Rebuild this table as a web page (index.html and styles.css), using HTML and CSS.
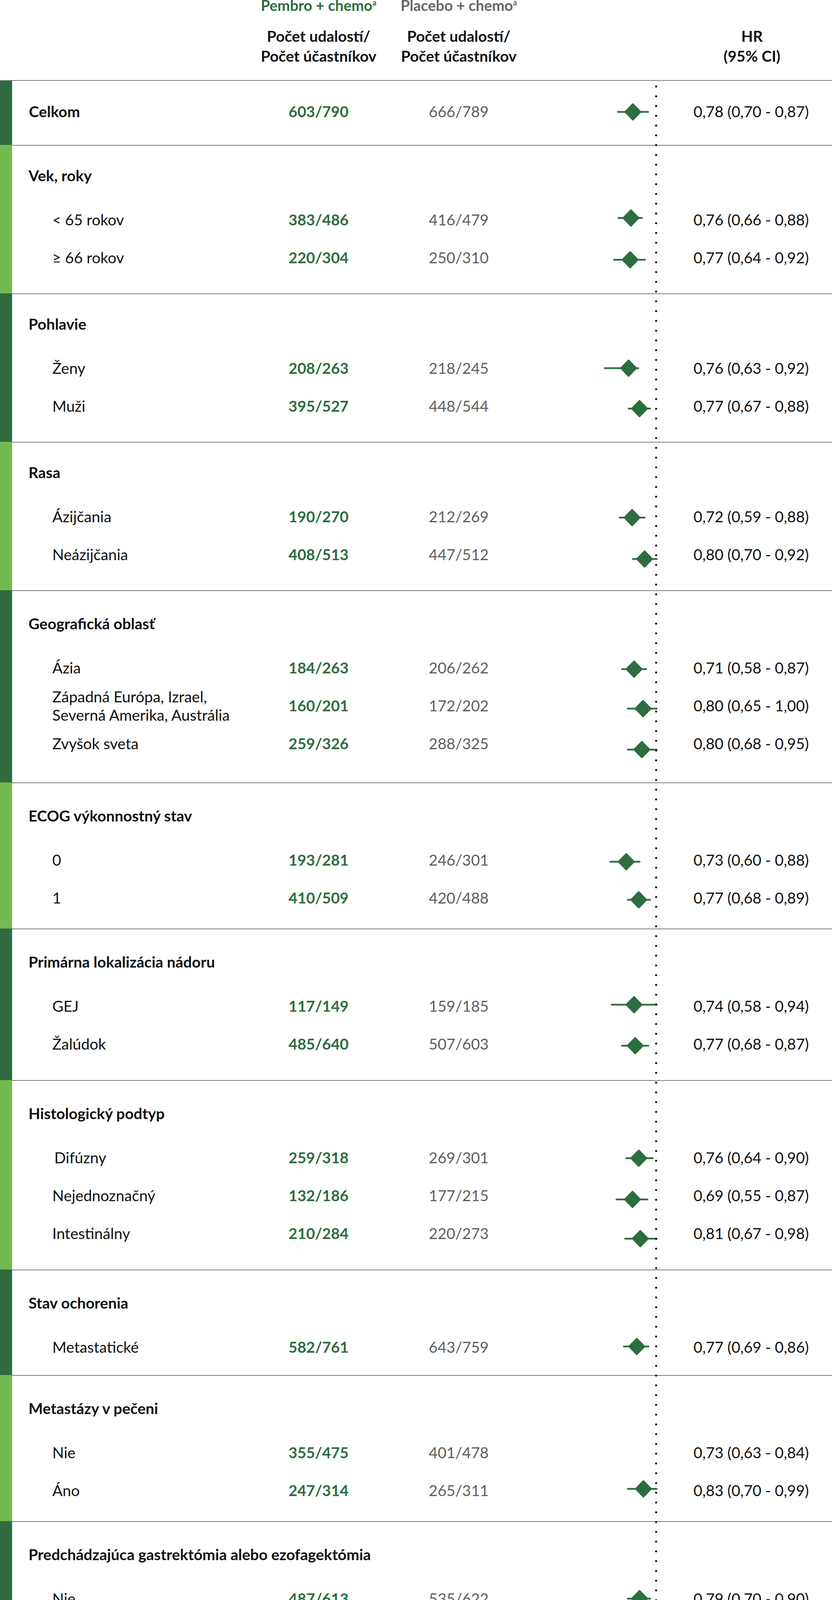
FILE: index.html
```html
<!DOCTYPE html>
<html lang="sk">
<head>
<meta charset="utf-8">
<title>Forest plot – podskupiny</title>
<link rel="stylesheet" href="styles.css">
</head>
<body>
<div class="chart">
  <header class="head">
    <div></div>
    <div class="hcol">
      <div class="arm arm--pembro">Pembro + chemo<sup class="sup">a</sup></div>
      <div class="hsub">Počet udalostí/<br>Počet účastníkov</div>
    </div>
    <div></div>
    <div class="hcol">
      <div class="arm arm--placebo">Placebo + chemo<sup class="sup">a</sup></div>
      <div class="hsub">Počet udalostí/<br>Počet účastníkov</div>
    </div>
    <div></div>
    <div class="hcol">
      <div class="arm"></div>
      <div class="hsub">HR<br>(95% CI)</div>
    </div>
    <div></div>
  </header>

  <div class="groups">
    <section class="grp grp--dark grp--first">
      <div class="bar"></div>
      <div class="body">
        <div class="row row--total">
          <div class="lbl">Celkom</div><div class="num num--pem">603/790</div><div class="num num--pla">666/789</div>
          <div class="plot"><svg class="fp" width="340" height="97" viewBox="0 0 340 97"><line class="ci" x1="149" y1="49.5" x2="226" y2="49.5"/><path class="dia" d="M187 29.5L206.5 49.5L187 69.5L167.5 49.5Z"/></svg></div>
          <div class="hr">0,78 (0,70 - 0,87)</div>
        </div>
      </div>
    </section>

    <section class="grp grp--light grp--tight">
      <div class="bar"></div>
      <div class="body">
        <h3 class="title">Vek, roky</h3>
        <div class="row">
          <div class="lbl">&lt; 65 rokov</div><div class="num num--pem">383/486</div><div class="num num--pla">416/479</div>
          <div class="plot"><svg class="fp" width="340" height="97" viewBox="0 0 340 97"><line class="ci" x1="150" y1="44" x2="210" y2="44"/><path class="dia" d="M182 24L201.5 44L182 64L162.5 44Z"/></svg></div>
          <div class="hr">0,76 (0,66 - 0,88)</div>
        </div>
        <div class="row">
          <div class="lbl">≥ 66 rokov</div><div class="num num--pem">220/304</div><div class="num num--pla">250/310</div>
          <div class="plot"><svg class="fp" width="340" height="97" viewBox="0 0 340 97"><line class="ci" x1="139" y1="54" x2="218" y2="54"/><path class="dia" d="M180 34L199.5 54L180 74L160.5 54Z"/></svg></div>
          <div class="hr">0,77 (0,64 - 0,92)</div>
        </div>
      </div>
    </section>

    <section class="grp grp--dark grp--tight">
      <div class="bar"></div>
      <div class="body">
        <h3 class="title">Pohlavie</h3>
        <div class="row">
          <div class="lbl">Ženy</div><div class="num num--pem">208/263</div><div class="num num--pla">218/245</div>
          <div class="plot"><svg class="fp" width="340" height="97" viewBox="0 0 340 97"><line class="ci" x1="115" y1="48.5" x2="201" y2="48.5"/><path class="dia" d="M176 28.5L195.5 48.5L176 68.5L156.5 48.5Z"/></svg></div>
          <div class="hr">0,76 (0,63 - 0,92)</div>
        </div>
        <div class="row">
          <div class="lbl">Muži</div><div class="num num--pem">395/527</div><div class="num num--pla">448/544</div>
          <div class="plot"><svg class="fp" width="340" height="97" viewBox="0 0 340 97"><line class="ci" x1="176" y1="55" x2="231" y2="55"/><path class="dia" d="M204 35L223.5 55L204 75L184.5 55Z"/></svg></div>
          <div class="hr">0,77 (0,67 - 0,88)</div>
        </div>
      </div>
    </section>

    <section class="grp grp--light grp--tight">
      <div class="bar"></div>
      <div class="body">
        <h3 class="title">Rasa</h3>
        <div class="row">
          <div class="lbl">Ázijčania</div><div class="num num--pem">190/270</div><div class="num num--pla">212/269</div>
          <div class="plot"><svg class="fp" width="340" height="97" viewBox="0 0 340 97"><line class="ci" x1="153" y1="51" x2="217" y2="51"/><path class="dia" d="M185 31L204.5 51L185 71L165.5 51Z"/></svg></div>
          <div class="hr">0,72 (0,59 - 0,88)</div>
        </div>
        <div class="row">
          <div class="lbl">Neázijčania</div><div class="num num--pem">408/513</div><div class="num num--pla">447/512</div>
          <div class="plot"><svg class="fp" width="340" height="97" viewBox="0 0 340 97"><line class="ci" x1="187" y1="60" x2="248" y2="60"/><path class="dia" d="M217 40L236.5 60L217 80L197.5 60Z"/></svg></div>
          <div class="hr">0,80 (0,70 - 0,92)</div>
        </div>
      </div>
    </section>

    <section class="grp grp--dark grp--pb51">
      <div class="bar"></div>
      <div class="body">
        <h3 class="title">Geografická oblasť</h3>
        <div class="row">
          <div class="lbl">Ázia</div><div class="num num--pem">184/263</div><div class="num num--pla">206/262</div>
          <div class="plot"><svg class="fp" width="340" height="97" viewBox="0 0 340 97"><line class="ci" x1="159" y1="52" x2="221" y2="52"/><path class="dia" d="M190 32L209.5 52L190 72L170.5 52Z"/></svg></div>
          <div class="hr">0,71 (0,58 - 0,87)</div>
        </div>
        <div class="row">
          <div class="lbl lbl--two">Západná Európa, Izrael,<br>Severná Amerika, Austrália</div><div class="num num--pem">160/201</div><div class="num num--pla">172/202</div>
          <div class="plot"><svg class="fp" width="340" height="97" viewBox="0 0 340 97"><line class="ci" x1="174" y1="56" x2="248" y2="56"/><path class="dia" d="M213 36L232.5 56L213 76L193.5 56Z"/></svg></div>
          <div class="hr">0,80 (0,65 - 1,00)</div>
        </div>
        <div class="row">
          <div class="lbl">Zvyšok sveta</div><div class="num num--pem">259/326</div><div class="num num--pla">288/325</div>
          <div class="plot"><svg class="fp" width="340" height="97" viewBox="0 0 340 97"><line class="ci" x1="174" y1="64" x2="248" y2="64"/><path class="dia" d="M210 44L229.5 64L210 84L190.5 64Z"/></svg></div>
          <div class="hr">0,80 (0,68 - 0,95)</div>
        </div>
      </div>
    </section>

    <section class="grp grp--light grp--pb30">
      <div class="bar"></div>
      <div class="body">
        <h3 class="title">ECOG výkonnostný stav</h3>
        <div class="row">
          <div class="lbl">0</div><div class="num num--pem">193/281</div><div class="num num--pla">246/301</div>
          <div class="plot"><svg class="fp" width="340" height="97" viewBox="0 0 340 97"><line class="ci" x1="129" y1="53" x2="204" y2="53"/><path class="dia" d="M170 33L189.5 53L170 73L150.5 53Z"/></svg></div>
          <div class="hr">0,73 (0,60 - 0,88)</div>
        </div>
        <div class="row">
          <div class="lbl">1</div><div class="num num--pem">410/509</div><div class="num num--pla">420/488</div>
          <div class="plot"><svg class="fp" width="340" height="97" viewBox="0 0 340 97"><line class="ci" x1="174" y1="53.5" x2="231" y2="53.5"/><path class="dia" d="M202 33.5L221.5 53.5L202 73.5L182.5 53.5Z"/></svg></div>
          <div class="hr">0,77 (0,68 - 0,89)</div>
        </div>
      </div>
    </section>

    <section class="grp grp--dark">
      <div class="bar"></div>
      <div class="body">
        <h3 class="title">Primárna lokalizácia nádoru</h3>
        <div class="row">
          <div class="lbl">GEJ</div><div class="num num--pem">117/149</div><div class="num num--pla">159/185</div>
          <div class="plot"><svg class="fp" width="340" height="97" viewBox="0 0 340 97"><line class="ci" x1="133" y1="45" x2="248" y2="45"/><path class="dia" d="M190 25L209.5 45L190 65L170.5 45Z"/></svg></div>
          <div class="hr">0,74 (0,58 - 0,94)</div>
        </div>
        <div class="row">
          <div class="lbl">Žalúdok</div><div class="num num--pem">485/640</div><div class="num num--pla">507/603</div>
          <div class="plot"><svg class="fp" width="340" height="97" viewBox="0 0 340 97"><line class="ci" x1="159" y1="53" x2="227" y2="53"/><path class="dia" d="M193 33L212.5 53L193 73L173.5 53Z"/></svg></div>
          <div class="hr">0,77 (0,68 - 0,87)</div>
        </div>
      </div>
    </section>

    <section class="grp grp--light">
      <div class="bar"></div>
      <div class="body">
        <h3 class="title">Histologický podtyp</h3>
        <div class="row">
          <div class="lbl lbl--in">Difúzny</div><div class="num num--pem">259/318</div><div class="num num--pla">269/301</div>
          <div class="plot"><svg class="fp" width="340" height="97" viewBox="0 0 340 97"><line class="ci" x1="170" y1="50" x2="238" y2="50"/><path class="dia" d="M202 30L221.5 50L202 70L182.5 50Z"/></svg></div>
          <div class="hr">0,76 (0,64 - 0,90)</div>
        </div>
        <div class="row">
          <div class="lbl">Nejednoznačný</div><div class="num num--pem">132/186</div><div class="num num--pla">177/215</div>
          <div class="plot"><svg class="fp" width="340" height="97" viewBox="0 0 340 97"><line class="ci" x1="145" y1="58.5" x2="224" y2="58.5"/><path class="dia" d="M186 38.5L205.5 58.5L186 78.5L166.5 58.5Z"/></svg></div>
          <div class="hr">0,69 (0,55 - 0,87)</div>
        </div>
        <div class="row">
          <div class="lbl">Intestinálny</div><div class="num num--pem">210/284</div><div class="num num--pla">220/273</div>
          <div class="plot"><svg class="fp" width="340" height="97" viewBox="0 0 340 97"><line class="ci" x1="167" y1="62" x2="248" y2="62"/><path class="dia" d="M206 42L225.5 62L206 82L186.5 62Z"/></svg></div>
          <div class="hr">0,81 (0,67 - 0,98)</div>
        </div>
      </div>
    </section>

    <section class="grp grp--dark grp--pb23">
      <div class="bar"></div>
      <div class="body">
        <h3 class="title">Stav ochorenia</h3>
        <div class="row">
          <div class="lbl">Metastatické</div><div class="num num--pem">582/761</div><div class="num num--pla">643/759</div>
          <div class="plot"><svg class="fp" width="340" height="97" viewBox="0 0 340 97"><line class="ci" x1="164" y1="47" x2="227" y2="47"/><path class="dia" d="M197 27L216.5 47L197 67L177.5 47Z"/></svg></div>
          <div class="hr">0,77 (0,69 - 0,86)</div>
        </div>
      </div>
    </section>

    <section class="grp grp--light grp--pb30">
      <div class="bar"></div>
      <div class="body">
        <h3 class="title">Metastázy v pečeni</h3>
        <div class="row">
          <div class="lbl">Nie</div><div class="num num--pem">355/475</div><div class="num num--pla">401/478</div>
          <div class="plot"></div>
          <div class="hr">0,73 (0,63 - 0,84)</div>
        </div>
        <div class="row">
          <div class="lbl">Áno</div><div class="num num--pem">247/314</div><div class="num num--pla">265/311</div>
          <div class="plot"><svg class="fp" width="340" height="97" viewBox="0 0 340 97"><line class="ci" x1="174" y1="44.5" x2="248" y2="44.5"/><path class="dia" d="M214 24.5L233.5 44.5L214 64.5L194.5 44.5Z"/></svg></div>
          <div class="hr">0,83 (0,70 - 0,99)</div>
        </div>
      </div>
    </section>

    <section class="grp grp--dark">
      <div class="bar"></div>
      <div class="body">
        <h3 class="title">Predchádzajúca gastrektómia alebo ezofagektómia</h3>
        <div class="row">
          <div class="lbl">Nie</div><div class="num num--pem">487/613</div><div class="num num--pla">535/622</div>
          <div class="plot"><svg class="fp" width="340" height="97" viewBox="0 0 340 97"><line class="ci" x1="174" y1="48.5" x2="231" y2="48.5"/><path class="dia" d="M204 28.5L223.5 48.5L204 68.5L184.5 48.5Z"/></svg></div>
          <div class="hr">0,79 (0,70 - 0,90)</div>
        </div>
        <div class="row">
          <div class="lbl">Áno</div><div class="num num--pem">112/172</div><div class="num num--pla">126/162</div>
          <div class="plot"><svg class="fp" width="340" height="97" viewBox="0 0 340 97"><line class="ci" x1="145" y1="53.5" x2="231" y2="53.5"/><path class="dia" d="M189 33.5L208.5 53.5L189 73.5L169.5 53.5Z"/></svg></div>
          <div class="hr">0,69 (0,54 - 0,90)</div>
        </div>
      </div>
    </section>

    <section class="grp grp--light grp--pb30">
      <div class="bar"></div>
      <div class="body">
        <h3 class="title">MSI status</h3>
        <div class="row">
          <div class="lbl">Vysoký</div><div class="num num--pem">14/39</div><div class="num num--pla">25/35</div>
          <div class="plot"><svg class="fp" width="340" height="97" viewBox="0 0 340 97"><line class="ci" x1="-7" y1="51" x2="197" y2="51"/><path class="dia" d="M95 31L114.5 51L95 71L75.5 51Z"/></svg></div>
          <div class="hr">0,34 (0,18 - 0,66)</div>
        </div>
        <div class="row">
          <div class="lbl">Nízky alebo mikrosatelitovo stabilný</div><div class="num num--pem">497/641</div><div class="num num--pla">540/639</div>
          <div class="plot"><svg class="fp" width="340" height="97" viewBox="0 0 340 97"><line class="ci" x1="170" y1="58.5" x2="227" y2="58.5"/><path class="dia" d="M205 38.5L224.5 58.5L205 78.5L185.5 58.5Z"/></svg></div>
          <div class="hr">0,79 (0,70 - 0,89)</div>
        </div>
      </div>
    </section>

    <section class="grp grp--dark grp--pb30">
      <div class="bar"></div>
      <div class="body">
        <h3 class="title">PD-L1 CPS pri vstupe</h3>
        <div class="row">
          <div class="lbl">&lt; 1</div><div class="num num--pem">139/172</div><div class="num num--pla">140/172</div>
          <div class="plot"><svg class="fp" width="340" height="97" viewBox="0 0 340 97"><line class="ci" x1="193" y1="48.5" x2="278" y2="48.5"/><path class="dia" d="M228 28.5L247.5 48.5L228 68.5L208.5 48.5Z"/></svg></div>
          <div class="hr">0,92 (0,73 - 1,17)</div>
        </div>
        <div class="row">
          <div class="lbl">≥ 1</div><div class="num num--pem">464/618</div><div class="num num--pla">526/617</div>
          <div class="plot"><svg class="fp" width="340" height="97" viewBox="0 0 340 97"><line class="ci" x1="142" y1="55" x2="197" y2="55"/><path class="dia" d="M174 35L193.5 55L174 75L154.5 55Z"/></svg></div>
          <div class="hr">0,73 (0,65 - 0,83)</div>
        </div>
        <div class="row">
          <div class="lbl">1 - 9</div><div class="num num--pem">274/337</div><div class="num num--pla">300/345</div>
          <div class="plot"><svg class="fp" width="340" height="97" viewBox="0 0 340 97"><line class="ci" x1="163" y1="47" x2="227" y2="47"/><path class="dia" d="M195 27L214.5 47L195 67L175.5 47Z"/></svg></div>
          <div class="hr">0,83 (0,70 - 0,98)</div>
        </div>
        <div class="row">
          <div class="lbl">&lt; 10</div><div class="num num--pem">413/509</div><div class="num num--pla">440/517</div>
          <div class="plot"><svg class="fp" width="340" height="97" viewBox="0 0 340 97"><line class="ci" x1="186" y1="43" x2="248" y2="43"/><path class="dia" d="M208 23L227.5 43L208 63L188.5 43Z"/></svg></div>
          <div class="hr">0,86 (0,75 - 0,98)</div>
        </div>
        <div class="row">
          <div class="lbl">≥ 10</div><div class="num num--pem">188/279</div><div class="num num--pla">226/272</div>
          <div class="plot"><svg class="fp" width="340" height="97" viewBox="0 0 340 97"><line class="ci" x1="126" y1="44" x2="204" y2="44"/><path class="dia" d="M166 24L185.5 44L166 64L146.5 44Z"/></svg></div>
          <div class="hr">0,64 (0,52 - 0,77)</div>
        </div>
      </div>
    </section>

    <section class="grp grp--light grp--pb30">
      <div class="bar"></div>
      <div class="body">
        <h3 class="title">Chemoterapia pri randomizácii</h3>
        <div class="row">
          <div class="lbl">Kapecitabín a oxaliplatina</div><div class="num num--pem">509/682</div><div class="num num--pla">567/681</div>
          <div class="plot"><svg class="fp" width="340" height="97" viewBox="0 0 340 97"><path class="dia" d="M208 29.5L227.5 49.5L208 69.5L188.5 49.5Z"/></svg></div>
          <div class="hr">0,76 (0,68-0,86)</div>
        </div>
        <div class="row">
          <div class="lbl">Fluorouracil a cisplatina</div><div class="num num--pem">94/108</div><div class="num num--pla">99/108</div>
          <div class="plot"><svg class="fp" width="340" height="97" viewBox="0 0 340 97"><line class="ci" x1="170" y1="42" x2="259" y2="42"/><path class="dia" d="M214 22L233.5 42L214 62L194.5 42Z"/></svg></div>
          <div class="hr">0,82 (0,62-1,09)</div>
        </div>
      </div>
    </section>
  </div>

  <svg class="axis" width="2131" height="334" viewBox="0 0 2131 334">
    <path class="axis-green" d="M1338 83V33H1860V83M1513 33V83"/>
    <text class="tick" x="1335" y="149">0,1</text>
    <text class="tick" x="1513" y="149">0,3</text>
    <text class="tick" x="1678" y="142">1,0</text>
    <text class="tick" x="1858" y="149">3,0</text>
    <path class="axis-gray" d="M1338 181V217H1671V181M1691 181V217H1860V181"/>
    <text class="favor favor--pem" x="1504" y="285">V prospech</text>
    <text class="favor favor--pem" x="1504" y="326">pembrolizumabu</text>
    <text class="favor favor--pla" x="1776" y="285">V prospech</text>
    <text class="favor favor--pla" x="1776" y="326">placeba</text>
  </svg>

  <div class="dots"></div>
</div>
</body>
</html>
```

FILE: styles.css
```css
* {
  box-sizing: border-box;
  margin: 0;
  padding: 0;
}

html,
body {
  background: #ffffff;
}

body {
  margin: 0;
  width: 2131px;
  font-family: Lato, "Liberation Sans", sans-serif;
  color: #111111;
}

.chart {
  position: relative;
  width: 2131px;
}

/* ---------- header ---------- */
.head {
  height: 207px;
  border-bottom: 2px solid #7c7c7c;
  display: grid;
  grid-template-columns: 656px 320px 39px 320px 431px 320px 45px;
}

.hcol {
  text-align: center;
  white-space: nowrap;
}

.arm {
  height: 38px;
  margin-top: -6px;
  font-size: 38px;
  line-height: 38px;
  font-weight: 700;
}

.arm--pembro {
  color: #2d6d3f;
}

.arm--placebo {
  color: #666666;
}

.sup {
  font-size: 20px;
  vertical-align: 14px;
  line-height: 0;
}

.hsub {
  margin-top: 35px;
  font-size: 39px;
  line-height: 51px;
  font-weight: 700;
}

/* ---------- groups ---------- */
.groups {
  border-bottom: 2px solid #7c7c7c;
}

.grp {
  display: flex;
}

.bar {
  width: 31px;
  flex: none;
}

.grp--dark .bar {
  background: #2e6b41;
}

.grp--light .bar {
  background: #74b94d;
}

.body {
  flex: 1;
  min-width: 0;
  border-top: 2px solid #7c7c7c;
  padding-top: 58px;
  padding-bottom: 44px;
}

.grp--tight .body {
  padding-top: 51px;
  padding-bottom: 43px;
}

.grp--pb30 .body {
  padding-bottom: 30px;
}

.grp--pb51 .body {
  padding-bottom: 51px;
}

.grp--pb23 .body {
  padding-bottom: 23px;
}

.grp--first .body {
  border-top: 0;
  padding-top: 30px;
  padding-bottom: 37px;
}

.title {
  height: 50px;
  margin-bottom: 40px;
  padding-left: 42px;
  font-size: 39px;
  line-height: 50px;
  font-weight: 700;
  white-space: nowrap;
}

.row {
  display: grid;
  grid-template-columns: 685px 200px 518px 320px 340px;
  height: 97px;
  align-items: center;
  font-size: 39px;
  line-height: 47px;
  white-space: nowrap;
}

.lbl {
  padding-left: 103px;
}

.lbl--in {
  padding-left: 108px;
}

.row--total .lbl {
  padding-left: 43px;
  font-weight: 700;
}

.num {
  text-align: center;
}

.num--pem {
  color: #2d6d3f;
  font-weight: 700;
}

.num--pla {
  color: #5e5e5e;
}

.plot {
  height: 97px;
}

.fp {
  display: block;
  overflow: visible;
}

.ci {
  stroke: #2d6d3f;
  stroke-width: 4.5;
  stroke-linecap: round;
}

.dia {
  fill: #2d6d3f;
  stroke: #2d6d3f;
  stroke-width: 4;
  stroke-linejoin: round;
}

.hr {
  text-align: center;
}

/* ---------- axis ---------- */
.axis {
  display: block;
  overflow: visible;
}

.axis-green {
  fill: none;
  stroke: #2d6d3f;
  stroke-width: 4.5;
}

.axis-gray {
  fill: none;
  stroke: #9c9c9c;
  stroke-width: 2;
}

.tick {
  font-family: Lato, "Liberation Sans", sans-serif;
  font-size: 45px;
  font-weight: 700;
  fill: #111111;
  text-anchor: middle;
}

.favor {
  font-family: Lato, "Liberation Sans", sans-serif;
  font-size: 37px;
  font-weight: 700;
  text-anchor: middle;
}

.favor--pem {
  fill: #2d6d3f;
}

.favor--pla {
  fill: #666666;
}

/* dotted reference line at HR = 1,0 */
.dots {
  position: absolute;
  left: 1678px;
  top: 209px;
  width: 5px;
  height: 5550px;
  background-image: radial-gradient(circle at 2.5px 12.5px, #111111 2.2px, rgba(17, 17, 17, 0) 2.9px);
  background-size: 5px 25px;
  background-repeat: repeat-y;
  pointer-events: none;
}
```
